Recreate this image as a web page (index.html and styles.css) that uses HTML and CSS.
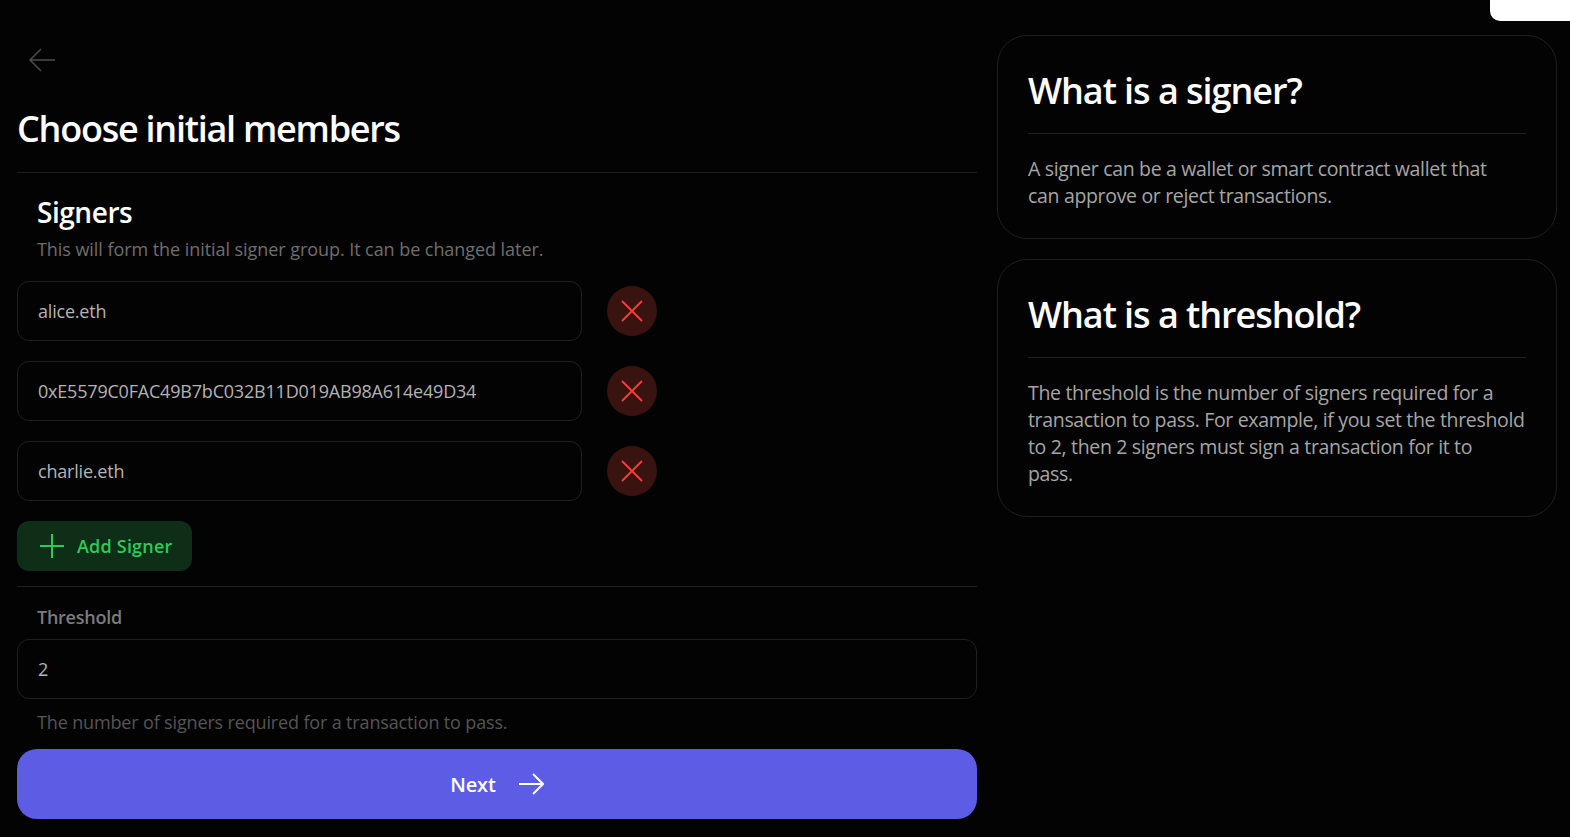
FILE: index.html
```html
<!DOCTYPE html>
<html lang="en">
<head>
<meta charset="utf-8">
<title>Choose initial members</title>
<link rel="stylesheet" href="styles.css">
</head>
<body>
<div class="tab"></div>
<div class="layout">
  <main class="form">
    <button class="back" aria-label="Back">
      <svg width="26" height="24" viewBox="0 0 26 24"><path d="M26 12H1M12 1 1 12l11 11" class="stroke"/></svg>
    </button>
    <h1 class="title">Choose initial members</h1>
    <hr class="rule">
    <section class="signers">
      <h2 class="section-title">Signers</h2>
      <p class="section-sub">This will form the initial signer group. It can be changed later.</p>
    </section>
    <div class="rows">
      <div class="row">
        <div class="field field-signer">alice.eth</div>
        <button class="remove" aria-label="Remove"><svg width="22" height="22" viewBox="0 0 22 22"><path d="M1 1l20 20M21 1 1 21" class="stroke stroke-bold"/></svg></button>
      </div>
      <div class="row">
        <div class="field field-signer">0xE5579C0FAC49B7bC032B11D019AB98A614e49D34</div>
        <button class="remove" aria-label="Remove"><svg width="22" height="22" viewBox="0 0 22 22"><path d="M1 1l20 20M21 1 1 21" class="stroke stroke-bold"/></svg></button>
      </div>
      <div class="row">
        <div class="field field-signer">charlie.eth</div>
        <button class="remove" aria-label="Remove"><svg width="22" height="22" viewBox="0 0 22 22"><path d="M1 1l20 20M21 1 1 21" class="stroke stroke-bold"/></svg></button>
      </div>
    </div>
    <button class="add">
      <svg width="24" height="24" viewBox="0 0 24 24"><path d="M0 12h24M12 0v24" class="stroke stroke-bold"/></svg>
      <span>Add Signer</span>
    </button>
    <hr class="rule rule-lower">
    <label class="label">Threshold</label>
    <div class="field">2</div>
    <p class="help">The number of signers required for a transaction to pass.</p>
    <button class="next">
      <span>Next</span>
      <svg width="25" height="22" viewBox="0 0 25 22"><path d="M0 11h24M14 1l10 10-10 10" class="stroke stroke-bold"/></svg>
    </button>
  </main>
  <aside class="side">
    <article class="card">
      <h2 class="card-title">What is a signer?</h2>
      <hr class="rule">
      <p class="card-text">A signer can be a wallet or smart contract wallet that<br>can approve or reject transactions.</p>
    </article>
    <article class="card">
      <h2 class="card-title">What is a threshold?</h2>
      <hr class="rule">
      <p class="card-text">The threshold is the number of signers required for a<br>transaction to pass. For example, if you set the threshold<br>to 2, then 2 signers must sign a transaction for it to<br>pass.</p>
    </article>
  </aside>
</div>
</body>
</html>
```
FILE: styles.css
```css
* { box-sizing: border-box; }
html, body { height: 100%; }
body {
  margin: 0;
  background: #030303;
  color: #fff;
  font-family: "Open Sans", "Noto Sans", sans-serif;
  overflow: hidden;
}
button { font: inherit; border: 0; cursor: pointer; padding: 0; }
h1, h2, p { margin: 0; }
.stroke { fill: none; stroke: currentColor; stroke-width: 1.5; }
.stroke-bold { stroke-width: 2; }
.tab {
  position: absolute;
  top: 0;
  right: 0;
  width: 80px;
  height: 21px;
  background: #fff;
  border-bottom-left-radius: 10px;
}
.layout {
  display: flex;
  gap: 20px;
  padding: 35px 13px 0 17px;
}
.form { width: 960px; display: flex; flex-direction: column; }
.back {
  background: none;
  color: #4d4d4d;
  width: 26px;
  height: 24px;
  margin: 13px 0 0 12px;
  display: block;
}
.title {
  font-size: 36px;
  line-height: 48px;
  font-weight: 600;
  letter-spacing: -1.25px;
  margin-top: 33px;
}
.rule { border: 0; border-top: 1px solid #1f1f1f; margin: 0; width: 100%; }
.form > .rule { margin-top: 19px; }
.signers { padding: 21px 20px 0; }
.section-title { font-size: 28px; line-height: 36px; font-weight: 600; letter-spacing: -.45px; }
.section-sub { font-size: 18px; line-height: 26px; color: #6e6e6e; letter-spacing: -.06px; margin-top: 6px; }
.rows { display: flex; flex-direction: column; gap: 20px; margin-top: 19px; }
.row { display: flex; align-items: center; gap: 25px; }
.field {
  height: 60px;
  border: 1px solid #1f1f1f;
  border-radius: 12px;
  padding: 0 20px;
  display: flex;
  align-items: center;
  font-size: 18px;
  letter-spacing: -.2px;
  color: #b3b3b3;
}
.field-signer { width: 565px; }
.remove {
  width: 50px;
  height: 50px;
  border-radius: 50%;
  background: #391310;
  color: #ef4036;
  display: flex;
  align-items: center;
  justify-content: center;
}
.add {
  align-self: flex-start;
  margin-top: 20px;
  width: 175px;
  height: 50px;
  border-radius: 12px;
  background: #0f2e17;
  color: #2ecb57;
  display: flex;
  align-items: center;
  gap: 13px;
  padding-left: 23px;
  font-size: 18px;
  font-weight: 600;
  letter-spacing: .2px;
}
.form > .rule-lower { margin-top: 15px; }
.label {
  font-size: 18px;
  line-height: 24px;
  font-weight: 600;
  letter-spacing: -.25px;
  color: #7b7b7b;
  padding-left: 20px;
  margin-top: 18px;
  margin-bottom: 10px;
}
.help {
  font-size: 18px;
  line-height: 24px;
  letter-spacing: -.15px;
  color: #555;
  padding-left: 20px;
  margin-top: 11px;
}
.next {
  margin-top: 15px;
  height: 70px;
  border-radius: 20px;
  background: #5c5ce5;
  color: #fff;
  display: flex;
  align-items: center;
  justify-content: center;
  gap: 23px;
  font-size: 20px;
  font-weight: 600;
  letter-spacing: -.2px;
}
.side { width: 560px; display: flex; flex-direction: column; gap: 20px; }
.card {
  border: 1px solid #1f1f1f;
  border-radius: 30px;
  padding: 30px 30px 29px;
}
.card-title { font-size: 36px; line-height: 50px; font-weight: 600; letter-spacing: -1.05px; }
.card > .rule { margin-top: 17px; }
.card-text { font-size: 19.5px; line-height: 27px; color: #a6a6a6; letter-spacing: -.33px; margin-top: 21px; white-space: nowrap; }
```
